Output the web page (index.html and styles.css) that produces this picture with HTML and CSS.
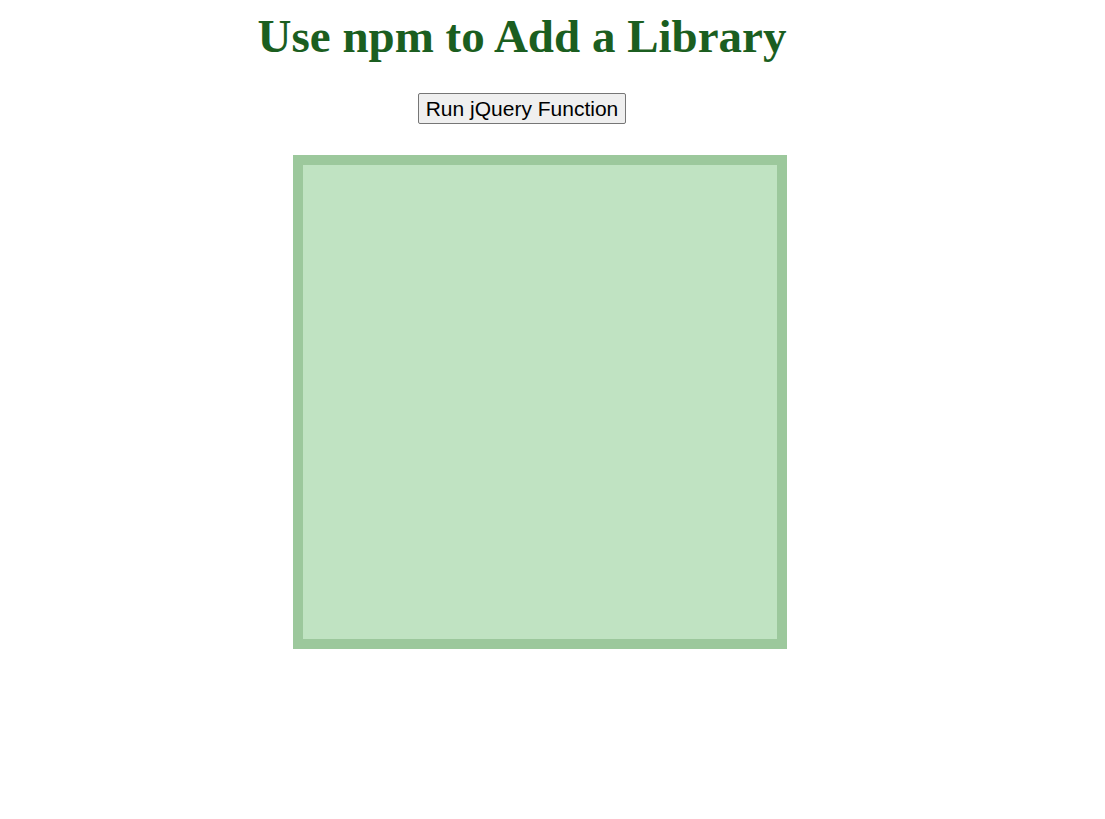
FILE: index.html
```html
<!DOCTYPE html>
<html>
<head>
<meta charset="utf-8">
<link rel="stylesheet" href="styles.css">
</head>
<body>
<div class="page">
  <h1 class="title">Use npm to Add a Library</h1>
  <div class="actions">
    <button class="run-btn">Run jQuery Function</button>
  </div>
  <div class="box"></div>
</div>
</body>
</html>
```
FILE: styles.css
```css
html, body {
  margin: 0;
  padding: 0;
  background: #ffffff;
}
.page {
  width: 1028px;
  margin-left: 8px;
  padding-top: 8px;
  text-align: center;
}
.title {
  margin: 0;
  font-family: "Liberation Serif", "Times New Roman", serif;
  font-weight: bold;
  font-size: 47px;
  line-height: 56px;
  color: #1b5e20;
}
.actions {
  margin-top: 29px;
  line-height: 0;
}
.run-btn {
  font-family: "Liberation Sans", Arial, sans-serif;
  font-size: 21px;
  line-height: 25px;
  color: #000;
  background: #efefef;
  border: 1px solid #767676;
  border-radius: 2px;
  padding: 2px 7px;
}
.box {
  width: 474px;
  height: 474px;
  margin: 31px 0 0 285px;
  background: #c0e3c2;
  border: 10px solid #9cc89c;
}
```
